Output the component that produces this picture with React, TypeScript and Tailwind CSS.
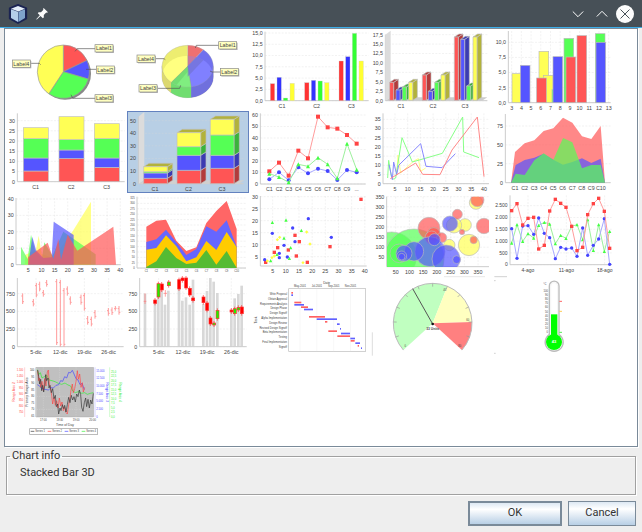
import { useState } from "react";
import type { ReactNode } from "react";

type Tick = [number, string];

const RED = "#ff5555";
const BLUE = "#5555ff";
const GREEN = "#55ff55";
const YELLOW = "#ffff55";
const SERIES = [RED, BLUE, GREEN, YELLOW];

// sides and tops of the 3D bars
const SHADES = ["#b23b3b", "#3b3bb2", "#3bb23b", "#b2b23b"];

const ticks = (start: number, step: number, labels: string): Tick[] =>
  labels.split(" ").map((label, i) => [start + step * i, label]);

const zip = (xs: number[], ys: number[]) => xs.map((x, i) => `${x},${ys[i]}`).join(" ");

interface AxesProps {
  left: number;
  right: number;
  top: number;
  base: number;
  xs: Tick[];
  ys: Tick[];
  xGrid?: boolean;
  size?: number;
  gap?: number;
}

const Axes = ({ left, right, top, base, xs, ys, xGrid = true, size = 16, gap = 16 }: AxesProps) => (
  <g>
    {ys.map(([y, label]) => (
      <g key={label}>
        <line x1={left} x2={right} y1={y} y2={y} stroke="#d8d8d8" strokeDasharray="6 4" />
        <text x={left - 7} y={y} dy={size * 0.36} textAnchor="end" fontSize={size}>
          {label}
        </text>
      </g>
    ))}
    {xs.map(([x, label]) => (
      <g key={label}>
        {xGrid && <line x1={x} x2={x} y1={top} y2={base} stroke="#d8d8d8" strokeDasharray="6 4" />}
        <text x={x} y={base + gap} dy={size * 0.36} textAnchor="middle" fontSize={size}>
          {label}
        </text>
      </g>
    ))}
    <path d={`M${left} ${top}V${base}H${right}`} fill="none" stroke="#ccc" strokeWidth="3" />
  </g>
);

// angles in degrees, clockwise from twelve o'clock
const point = (cx: number, cy: number, rx: number, ry: number, a: number) => {
  const rad = (a * Math.PI) / 180;
  return `${(cx + rx * Math.sin(rad)).toFixed(1)} ${(cy - ry * Math.cos(rad)).toFixed(1)}`;
};

const slice = (cx: number, cy: number, rx: number, ry: number, from: number, to: number) =>
  `M${cx} ${cy}L${point(cx, cy, rx, ry, from)}A${rx} ${ry} 0 ${to - from > 180 ? 1 : 0} 1 ${point(cx, cy, rx, ry, to)}Z`;

const Callout = ({ x, y, line, children }: { x: number; y: number; line: string; children: string }) => (
  <g>
    <path d={line} fill="none" stroke="#555" strokeWidth="2" />
    <rect x={x + 3} y={y + 3} width="54" height="22" fill="#bbb" />
    <rect x={x} y={y} width="54" height="22" fill="#ffffc0" stroke="#888" strokeWidth="2" />
    <text x={x + 27} y={y + 17} textAnchor="middle" fontSize="16">
      {children}
    </text>
  </g>
);

const Pie = () => (
  <g>
    <circle cx="195" cy="221" r="78" fill="#888" />
    {[
      [0, 65],
      [65, 106],
      [106, 214],
      [214, 360],
    ].map(([a, b], i) => (
      <path key={a} d={slice(190, 215, 78, 80, a, b)} fill={SERIES[i]} stroke="#999" strokeWidth="2" />
    ))}
    <Callout x={285} y={134} line="M225 154L232 146H285">Label1</Callout>
    <Callout x={289} y={198} line="M258 208H289">Label2</Callout>
    <Callout x={285} y={284} line="M213 284L218 295H285">Label3</Callout>
    <Callout x={37} y={180} line="M122 194L118 190H91">Label4</Callout>
  </g>
);

const wall = (a: number, b: number) =>
  `M${point(563, 199, 77, 63, a)}A77 63 0 0 1 ${point(563, 199, 77, 63, b)}L${point(563, 230, 77, 63, b)}A77 63 0 0 0 ${point(563, 230, 77, 63, a)}Z`;

const PIE_ANGLES = [0, 38, 172, 220, 360];

const Pie3D = () => (
  <g>
    <clipPath id="pie-floor">
      <ellipse cx="563" cy="230" rx="77" ry="63" />
    </clipPath>
    <path d={wall(90, 172)} fill="#7070dd" stroke="#999" />
    <path d={wall(172, 220)} fill="#70dd70" stroke="#999" />
    <path d={wall(220, 270)} fill="#dcd870" stroke="#999" />
    {["#ee7070", "#7070ee", "#70ee70", "#eded70"].map((fill, i) => (
      <path key={fill} d={slice(563, 199, 77, 63, PIE_ANGLES[i], PIE_ANGLES[i + 1])} fill={fill} stroke="#aaa" />
    ))}
    <g clipPath="url(#pie-floor)">
      {["#c878a0", "#8080ff", "#80ee80", "#ffff80"].map((fill, i) => (
        <path key={fill} d={slice(563, 199, 77, 63, PIE_ANGLES[i], PIE_ANGLES[i + 1])} fill={fill} stroke="#999" />
      ))}
      <path d={wall(220, 270)} fill="#dcd870" />
      <path d={wall(172, 220)} fill="#70dd70" />
      <path d={wall(90, 172)} fill="#7070dd" />
      <path d="M563 199L608 153L622 168L563 230Z" fill="#7070cc" opacity="0.6" />
      <path d="M563 199L514 247L530 254L563 215Z" fill="#66cc66" opacity="0.5" />
    </g>
    <Callout x={656} y={125} line="M586 144L589 136H656">Label1</Callout>
    <Callout x={661} y={205} line="M630 213L636 216H661">Label2</Callout>
    <Callout x={417} y={254} line="M542 256L539 265H471">Label3</Callout>
    <Callout x={411} y={165} line="M496 179L492 176H465">Label4</Callout>
  </g>
);

const BARS: [number, number][] = [
  [61, 251], [81, 232], [100, 294], [120, 250],
  [164, 248], [184, 241], [204, 243], [224, 248],
  [267, 183], [287, 170], [307, 100], [327, 183],
];

const BarChart = () => (
  <g>
    <Axes
      left={45}
      right={356}
      top={95}
      base={302}
      xGrid={false}
      xs={ticks(96, 104, "C1 C2 C3")}
      ys={ticks(99, 33.8, "15,0 12,5 10,0 7,5 5,0 2,5 0,0")}
    />
    {BARS.map(([x, y], i) => (
      <rect
        key={x}
        x={x}
        y={y}
        width="13"
        height={302 - y}
        fill={["#ff3333", "#3333ff", "#33ff33", "#ffff33"][i % 4]}
        stroke="#ccc"
      />
    ))}
  </g>
);

interface BlockProps {
  x: number;
  y: number;
  w: number;
  h: number;
  dx: number;
  dy: number;
  color: number;
  cap?: boolean;
}

const Block = ({ x, y, w, h, dx, dy, color, cap = true }: BlockProps) => (
  <g stroke="#c0c0c0" strokeWidth="2" strokeLinejoin="round">
    <path d={`M${x + w} ${y}l${dx} ${-dy}v${h}l${-dx} ${dy}Z`} fill={SHADES[color]} />
    {cap && <path d={`M${x} ${y}l${dx} ${-dy}h${w}l${-dx} ${dy}Z`} fill={SHADES[color]} />}
    <rect x={x} y={y} width={w} height={h} fill={SERIES[color]} />
  </g>
);

const BARS_3D: [number, number][] = [
  [419, 247], [438, 270], [457, 261], [476, 247],
  [517, 225], [535, 274], [554, 247], [573, 225],
  [613, 111], [632, 118], [650, 258], [669, 111],
];

const BarChart3D = () => (
  <g>
    <Axes
      left={406}
      right={712}
      top={104}
      base={302}
      xGrid={false}
      xs={ticks(453, 96, "C1 C2 C3")}
      ys={ticks(104, 28.3, "17,5 15,0 12,5 10,0 7,5 5,0 2,5 0,0")}
    />
    <path d="M406 104L422 92V292L406 302Z" fill="#dcdcdc" />
    <path d="M406 302L422 292H712L696 302Z" fill="#ccc" />
    {BARS_3D.map(([x, y], i) => (
      <Block key={x} x={x} y={y} w={12} h={301 - y} dx={14} dy={9} color={i % 4} />
    ))}
  </g>
);

const XY_BARS: [number, number, number][] = [
  [96, 221, 3], [121, 196, 1], [177, 154, 3], [190, 226, 3], [216, 268, 2], [170, 234, 0],
  [219, 170, 1], [252, 115, 2], [258, 171, 0], [291, 107, 0], [346, 101, 2], [348, 127, 1],
];

const XYBarChart = () => (
  <g>
    <Axes
      left={85}
      right={392}
      top={93}
      base={308}
      xs={ticks(95, 29.1, "3 4 5 6 7 8 9 10 11 12 13")}
      ys={ticks(127, 45.3, "10,0 7,5 5,0 2,5 0,0")}
    />
    {XY_BARS.map(([x, y, c]) => (
      <rect key={x} x={x} y={y} width="29" height={308 - y} fill={SERIES[c]} stroke="#bbb" strokeWidth="2" />
    ))}
  </g>
);

const Stacked = () => (
  <g>
    <Axes
      left={52}
      right={374}
      top={16}
      base={221}
      xGrid={false}
      xs={ticks(107, 106.5, "C1 C2 C3")}
      ys={ticks(38, 30.5, "30 25 20 15 10 5 0")}
    />
    {[
      [70, 221, 189, 150, 92, 59],
      [177, 221, 152, 126, 95, 26],
      [283, 221, 178, 150, 92, 47],
    ].map(([x, ...levels]) =>
      levels.slice(1).map((y, i) => (
        <rect
          key={`${x}-${y}`}
          x={x}
          y={y}
          width="75"
          height={levels[i] - y}
          fill={SERIES[i]}
          stroke="#c0c0c0"
          strokeWidth="2"
        />
      )),
    )}
  </g>
);

const Stacked3D = () => (
  <g>
    <Axes
      left={415}
      right={730}
      top={26}
      base={227}
      xGrid={false}
      xs={ticks(465, 100.5, "C1 C2 C3")}
      ys={ticks(38, 37.8, "50 40 30 20 10 0")}
    />
    <path d="M417 25L433 12V215L417 227Z" fill="#dcdcdc" />
    <path d="M417 227L433 217H733L717 227Z" fill="#d0d0d0" />
    {[
      [431, 227, 211, 195, 191, 176],
      [531, 227, 187, 142, 116, 74],
      [631, 227, 181, 142, 81, 34],
    ].map(([x, ...levels]) =>
      levels.slice(1).map((y, i) => (
        <Block key={`${x}-${y}`} x={x} y={y} w={71} h={levels[i] - y} dx={16} dy={10} color={i} cap={i === 3} />
      )),
    )}
  </g>
);

const Mark = ({ x, y, kind, r = 5 }: { x: number; y: number; kind: number; r?: number }) => {
  if (kind === 0) return <rect x={x - r} y={y - r} width={r * 2} height={r * 2} fill="#ff4444" />;
  if (kind === 1) return <circle cx={x} cy={y} r={r} fill="#4444ff" />;
  if (kind === 2) return <path d={`M${x} ${y - r}l${r} ${r * 2}h${-r * 2}Z`} fill="#44ff44" />;
  return <path d={`M${x} ${y - r}l${r} ${r}l${-r} ${r}l${-r} ${-r}Z`} fill="#ffff44" />;
};

const MarkedLine = ({ xs, ys, kind, r }: { xs: number[]; ys: number[]; kind: number; r: number }) => (
  <g>
    <polyline points={zip(xs, ys)} fill="none" stroke={["#ff9c9c", "#a8a8ff", "#9cf09c"][kind]} strokeWidth="3" />
    {xs.map((x, i) => (
      <Mark key={x} x={x} y={ys[i]} kind={kind} r={r} />
    ))}
  </g>
);

const LINE_X = [58, 87, 116, 145, 174, 204, 233, 262, 291, 320];

const LineChart = () => (
  <g>
    <Axes
      left={31}
      right={347}
      top={16}
      base={228}
      xGrid={false}
      xs={ticks(58, 29.1, "C1 C2 C3 C4 C5 C6 C7 C8 C9 ...")}
      ys={ticks(21, 34.5, "60 50 40 30 20 10 0")}
    />
    <MarkedLine xs={LINE_X} ys={[190, 164, 203, 128, 151, 26, 58, 62, 81, 107]} kind={0} r={6} />
    <MarkedLine xs={LINE_X} ys={[214, 193, 217, 178, 196, 182, 189, 216, 186, 193]} kind={1} r={6} />
    <MarkedLine xs={LINE_X} ys={[197, 207, 223, 169, 175, 149, 169, 211, 107, 185]} kind={2} r={6} />
  </g>
);

const XYLine = () => (
  <g>
    <Axes
      left={399}
      right={717}
      top={16}
      base={227}
      xs={ticks(435, 38.1, "5 10 15 20 25 30 35 40")}
      ys={ticks(34, 27.6, "35 30 25 20 15 10 5 0")}
    />
    <g fill="none" strokeWidth="3">
      <polyline stroke="#ffff88" points="440,200 444,141 452,195 490,160 505,152 512,190 527,180" />
      <polyline
        stroke="#88ff88"
        points="413,210 416,157 424,205 431,214 437,210 443,172 456,89 487,162 577,136 638,27 641,132 687,149"
      />
      <polyline
        stroke="#8888ff"
        points="417,170 427,215 431,162 440,200 446,172 512,107 528,175 576,179 616,137"
      />
      <polyline stroke="#ff8888" points="421,212 497,165 518,199 570,200 606,126 682,27 702,206" />
    </g>
  </g>
);

const AreaChart = () => (
  <g>
    <Axes
      left={76}
      right={392}
      top={18}
      base={224}
      xGrid={false}
      xs={ticks(105, 28.6, "C1 C2 C3 C4 C5 C6 C7 C8 C9 C10")}
      ys={ticks(54, 56.6, "75 50 25 0")}
    />
    <g fillOpacity="0.7">
      <polygon
        fill={RED}
        points="93,224 105,132 134,106 163,97 191,69 220,61 249,29 277,44 306,85 334,93 362,54 375,224"
      />
      <polygon
        fill={BLUE}
        points="93,224 107,171 134,156 163,149 191,137 220,155 249,170 277,162 306,151 334,165 362,152 375,224"
      />
      <polygon
        fill={GREEN}
        points="93,224 107,197 134,201 163,157 191,136 220,155 249,90 277,103 306,181 334,171 362,171 375,224"
      />
    </g>
  </g>
);

const XYArea = () => (
  <g>
    <Axes
      left={48}
      right={362}
      top={12}
      base={212}
      xs={ticks(85, 39.4, "5 10 15 20 25 30 35 40")}
      ys={ticks(15, 49.2, "40 30 20 10 0")}
    />
    <g fillOpacity="0.7">
      <polygon
        fill={YELLOW}
        points="74,212 76,182 108,168 116,125 125,180 160,192 219,110 273,23 273,212"
      />
      <polygon
        fill={GREEN}
        points="63,212 63,158 83,195 93,122 105,170 126,192 133,145 157,185 190,113 287,181 287,212"
      />
      <polygon fill={BLUE} points="85,212 97,128 108,168 130,192 155,190 161,83 221,123 221,212" />
      <polygon
        fill={RED}
        points="84,212 84,190 143,146 160,195 175,135 183,197 203,122 232,170 340,98 348,212"
      />
    </g>
  </g>
);

const STACK_X = [439, 469, 498, 529, 559, 589, 619, 649, 680, 710];
const STACK_AREAS: [string, number[]][] = [
  ["#ff6666", [98, 80, 77, 140, 171, 160, 87, 51, 21, 105]],
  ["#6666ff", [144, 136, 107, 145, 183, 165, 97, 113, 79, 158]],
  ["#ffcc00", [167, 162, 124, 157, 202, 190, 141, 168, 114, 160]],
  ["#55bb33", [219, 202, 159, 192, 210, 206, 168, 212, 171, 222]],
];

const StackedArea = () => (
  <g>
    <Axes
      left={411}
      right={738}
      top={8}
      base={222}
      xGrid={false}
      size={8}
      gap={9}
      xs={ticks(439, 30.1, "C1 C2 C3 C4 C5 C6 C7 C8 C9 C10")}
      ys={ticks(12, 16.2, "325 300 275 250 225 200 175 150 125 100 75 50 25 0")}
    />
    {STACK_AREAS.map(([fill, ys]) => (
      <polygon key={fill} fill={fill} points={`439,222 ${zip(STACK_X, ys)} 710,222`} />
    ))}
  </g>
);

const SCATTER: [number, number][][] = [
  [[333, 28], [135, 136], [148, 155], [83, 173], [73, 187], [115, 180], [139, 198], [172, 217], [240, 170], [47, 217]],
  [[44, 209], [67, 130], [88, 190], [88, 203], [102, 166], [112, 201], [128, 114], [135, 155], [175, 86], [244, 142]],
  [[67, 97], [108, 90], [102, 144], [154, 121], [122, 173], [81, 193], [62, 212], [118, 205]],
  [[89, 142], [82, 149], [170, 126], [180, 162], [73, 198], [66, 203], [52, 213], [159, 218]],
];

const Scatter = () => (
  <g>
    <Axes
      left={31}
      right={350}
      top={18}
      base={228}
      xs={ticks(68, 39.5, "5 10 15 20 25 30 35 40")}
      ys={ticks(20, 36, "30 25 20 15 10 5")}
    />
    {SCATTER.map((points, kind) => points.map(([x, y]) => <Mark key={`${x}-${y}`} x={x} y={y} kind={kind} />))}
  </g>
);

const BUBBLES: [number, number, number, number][] = [
  [425, 200, 74, 2], [492, 207, 90, 2], [448, 190, 28, 2],
  [678, 38, 20, 3], [645, 105, 19, 3], [612, 106, 23, 3], [598, 165, 17, 3], [657, 165, 32, 3], [551, 130, 18, 3],
  [537, 115, 33, 0], [551, 133, 20, 0], [545, 143, 20, 0], [575, 143, 15, 0], [622, 73, 15, 0],
  [702, 108, 23, 0], [682, 30, 20, 0], [671, 150, 11, 0], [636, 126, 8, 0],
  [540, 185, 45, 1], [588, 207, 42, 1], [492, 184, 29, 1], [462, 190, 24, 1], [455, 198, 15, 1],
  [455, 200, 10, 1], [620, 209, 12, 1], [600, 101, 23, 1], [553, 149, 18, 1],
];

const Bubbles = () => (
  <g>
    <Axes
      left={410}
      right={717}
      top={20}
      base={230}
      xs={ticks(437, 41.2, "50 100 150 200 250 300 350")}
      ys={ticks(20, 30.3, "350 300 250 200 150 100 50")}
    />
    <clipPath id="bubble-plot">
      <rect x="411" y="20" width="306" height="211" />
    </clipPath>
    <g clipPath="url(#bubble-plot)" fillOpacity="0.7" stroke="#bbb" strokeWidth="2">
      {BUBBLES.map(([x, y, r, c], i) => (
        <circle key={i} cx={x} cy={y} r={r} fill={SERIES[c]} />
      ))}
    </g>
  </g>
);

const TIME_X = [95, 111, 128, 144, 161, 176, 193, 209, 226, 242, 258, 275, 291, 308, 323, 340, 356, 373, 389];

const TimeSeries = () => (
  <g>
    <Axes
      left={90}
      right={395}
      top={262}
      base={470}
      size={15}
      gap={18}
      xs={ticks(144, 115, "4-ago 11-ago 18-ago")}
      ys={ticks(293, 35.4, "2.500 2.000 1.500 1.000 500 0")}
    />
    <MarkedLine
      xs={TIME_X}
      ys={[405, 350, 400, 377, 390, 352, 343, 348, 407, 382, 391, 355, 350, 395, 335, 427, 350, 430, 370]}
      kind={2}
      r={5}
    />
    <MarkedLine
      xs={TIME_X}
      ys={[362, 451, 354, 353, 379, 330, 376, 389, 452, 418, 423, 420, 445, 360, 442, 412, 393, 332, 469]}
      kind={1}
      r={5}
    />
    <MarkedLine
      xs={TIME_X}
      ys={[308, 287, 351, 331, 328, 423, 412, 309, 274, 286, 298, 355, 428, 418, 320, 287, 271, 310, 421]}
      kind={0}
      r={5}
    />
  </g>
);

const HIGH_LOW: [number, number, number][] = [
  [68, 58, 90], [100, 75, 97], [109, 27, 70], [119, 23, 52], [130, 48, 68], [140, 18, 38], [170, 15, 213],
  [181, 18, 218], [192, 42, 218], [202, 37, 65], [211, 67, 92], [243, 62, 92], [253, 57, 110], [263, 126, 152],
  [274, 128, 157], [285, 108, 134], [325, 102, 125], [336, 100, 123], [346, 96, 110], [357, 96, 122],
];

const HighLow = () => (
  <g>
    <Axes
      left={52}
      right={371}
      top={12}
      base={218}
      xs={ticks(108, 72.6, "5-dic 12-dic 19-dic 26-dic")}
      ys={ticks(59, 53, "750 500 250 0")}
    />
    {HIGH_LOW.map(([x, top, bottom]) => (
      <path
        key={x}
        d={`M${x} ${top}V${bottom}M${x - 4} ${top + 8}h4M${x} ${bottom - 7}h4`}
        stroke="#ff9a9a"
        strokeWidth="3"
      />
    ))}
  </g>
);

const VOLUME: [number, number][] = [
  [431, 59], [461, 80], [471, 65], [481, 50], [491, 92], [501, 50], [533, 45], [543, 80], [554, 70], [565, 92],
  [575, 17], [606, 90], [617, 51], [627, 12], [637, 23], [648, 57], [690, 113], [700, 73], [711, 60], [721, 35],
];

const CANDLES: [number, number, number, boolean][] = [
  [461, 78, 88, false], [471, 29, 69, true], [481, 30, 48, false], [502, 24, 35, true], [533, 17, 45, false],
  [543, 12, 20, false], [554, 12, 42, false], [565, 43, 63, false], [575, 72, 80, false], [606, 69, 86, false],
  [617, 87, 109, false], [627, 132, 150, false], [638, 147, 153, true], [648, 109, 134, true],
  [690, 108, 114, false], [700, 104, 119, true], [711, 100, 108, true], [721, 99, 119, false],
];

const Candlestick = () => (
  <g>
    {VOLUME.map(([x, y]) => (
      <rect key={x} x={x} y={y} width="8" height={218 - y} fill="#d8d8d8" />
    ))}
    <Axes
      left={419}
      right={740}
      top={12}
      base={218}
      xs={ticks(476, 72.6, "5-dic 12-dic 19-dic 26-dic")}
      ys={ticks(59, 53, "750 500 250 0")}
    />
    <path d="M435 58V90M431 82H439M496 48V68M491 58H501" stroke="#ff7777" strokeWidth="2" />
    {CANDLES.map(([x, top, bottom, up]) => (
      <g key={x} stroke="#ff3333" strokeWidth="2">
        <line x1={x + 4} x2={x + 4} y1={top - 6} y2={bottom + 6} />
        <rect x={x} y={top} width="9" height={bottom - top} fill={up ? "#22ee00" : "#ff0000"} />
      </g>
    ))}
  </g>
);

const TASKS = [
  "Write Proposal",
  "Obtain Approval",
  "Requirements Analysis",
  "Design Phase",
  "Design Signoff",
  "Alpha Implementation",
  "Design Review",
  "Revised Design Signoff",
  "Beta Implementation",
  "Testing",
  "Final Implementation",
  "Signoff",
];

const SPANS: [number, number, number, number][] = [
  [124, 54, 5, 0], [124, 61, 5, 1], [133, 83, 21, 0], [133, 90, 29, 1], [153, 97, 21, 0], [162, 104, 27, 1],
  [177, 126, 48, 0], [200, 133, 61, 1], [225, 141, 7, 0], [261, 148, 8, 1], [270, 162, 3, 1], [235, 169, 26, 0],
  [273, 176, 27, 1], [262, 184, 38, 0], [301, 191, 14, 1], [302, 198, 12, 0], [316, 205, 14, 1],
  [323, 213, 4, 0], [333, 220, 3, 1],
];

const Gantt = () => (
  <g fontSize="8">
    <rect x="116" y="44" width="231" height="188" fill="none" stroke="#bbb" strokeWidth="2" />
    {ticks(150, 50.5, "May-2001 Jul-2001 Sep-2001 Nov-2001").map(([x, label]) => (
      <g key={label}>
        <line x1={x} x2={x} y1="44" y2="232" stroke="#e8e8e8" />
        <text x={x} y="40" textAnchor="middle">
          {label}
        </text>
      </g>
    ))}
    {TASKS.map((task, i) => (
      <text key={task} x="111" y={63 + i * 14.4} textAnchor="end">
        {task}
      </text>
    ))}
    {SPANS.map(([x, y, w, c]) => (
      <rect key={y} x={x} y={y} width={w} height="5" fill={["#ff6060", "#6060ff"][c]} />
    ))}
    <text x="230" y="29" textAnchor="middle" fontSize="10">
      Date
    </text>
    <text transform="rotate(-90 22 138)" x="22" y="138" textAnchor="middle" fontSize="10">
      Task
    </text>
  </g>
);

const Gauge = () => (
  <g>
    <path d="M367 175V245" stroke="#ccc" strokeWidth="2" />
    <path d="M582 8H705" stroke="#ddd" strokeWidth="2" />
    <path d={slice(548, 148, 118, 120, -132, 22)} fill="#c0ffc0" />
    <path d={slice(548, 148, 118, 120, 22, 88)} fill="#ffffc0" />
    <path d={slice(548, 148, 118, 120, 88, 132)} fill="#ff8080" />
    <path
      d={`M${point(548, 148, 118, 120, -132)}A118 120 0 1 1 ${point(548, 148, 118, 120, 132)}`}
      fill="none"
      stroke="#bbb"
      strokeWidth="3"
    />
    {[-110, -88, -66, -44, -22, 0, 22, 44, 66, 88, 110].map((a) => (
      <path
        key={a}
        d={`M${point(548, 148, 108, 110, a)}L${point(548, 148, 118, 120, a)}`}
        stroke="#999"
        strokeWidth="2"
      />
    ))}
    <path d="M488 44L548 150" stroke="#555" strokeWidth="3" />
    <circle cx="548" cy="150" r="4" fill="#111" />
    <text x="548" y="168" textAnchor="middle" fontSize="10" fontWeight="bold">
      33 Units
    </text>
    <g fontSize="8" textAnchor="middle">
      <text x="466" y="219">0</text>
      <text x="584" y="50">40</text>
      <text x="653" y="141">60</text>
      <text x="629" y="219">80</text>
    </g>
  </g>
);

const Thermometer = () => (
  <g>
    <path d="M733 8H771M732 20H737M732 238H737" stroke="#bbb" strokeWidth="2" />
    <path
      d="M898 182V36a14 14 0 0 1 29 0V182a27 27 0 1 1-29 0Z"
      fill="#fff"
      stroke="#bbb"
      strokeWidth="4"
    />
    <path d="M902 178V36a10 10 0 0 1 21 0V178" fill="none" stroke="#ddd" strokeWidth="1" />
    <rect x="903" y="121" width="19" height="70" fill="#00ff00" />
    <circle cx="912" cy="204" r="24" fill="#00ff00" />
    <text x="912" y="208" textAnchor="middle" fontSize="12" fontWeight="bold" fill="#fff">
      43
    </text>
    <g fontSize="8" textAnchor="end">
      <text x="889" y="32">°C</text>
      {ticks(53, 12.5, "100 90 80 70 60 50 40 30 20 10 0").map(([y, label]) => (
        <text key={label} x="894" y={y}>
          {label}
        </text>
      ))}
    </g>
    <g strokeWidth="3">
      <path d="M928 82H936" stroke="#ff6666" />
      <path d="M928 112H936" stroke="#ffcc55" />
      <path d="M928 175H936" stroke="#55ee55" />
    </g>
  </g>
);

interface ScaleProps {
  x: number;
  titleX: number;
  title: string;
  labels: Tick[];
  color: string;
  side: "left" | "right";
}

const Scale = ({ x, titleX, title, labels, color, side }: ScaleProps) => (
  <g fill={color} fontSize="8">
    <line x1={x} x2={x} y1="28" y2="177" stroke={color} strokeOpacity="0.7" />
    {labels.map(([y, label]) => (
      <text key={label} x={side === "left" ? x - 4 : x + 4} y={y + 3} textAnchor={side === "left" ? "end" : "start"}>
        {label}
      </text>
    ))}
    <text
      transform={`rotate(${side === "left" ? -90 : 90} ${titleX} 102)`}
      x={titleX}
      y="102"
      textAnchor="middle"
      fontSize="10"
    >
      {title}
    </text>
  </g>
);

const MultiAxis = () => (
  <g>
    <Scale x={74} titleX={44} title="Range Axis 2" color="#ff4444" side="left" labels={ticks(36, 17.8, "1.100 1.050 1.000 950 900 850 800 750")} />
    <Scale x={107} titleX={84} title="Primary Range Axis" color="#333" side="left" labels={ticks(36, 19.7, "100 95 90 85 80 75 70 65")} />
    <Scale x={285} titleX={318} title="Range Axis 3" color="#4444ff" side="right" labels={ticks(38, 23.1, "15.000 12.500 10.000 7.500 5.000 2.500 0")} />
    <Scale x={329} titleX={356} title="Range Axis 4" color="#33ee33" side="right" labels={ticks(42, 13.4, "25,0 22,5 20,0 17,5 15,0 12,5 10,0 7,5 5,0 2,5 0,0")} />
    <rect x="110" y="28" width="171" height="149" fill="#c0c0c0" stroke="#999" />
    <path d="M130 28V177M179 28V177M228 28V177M110 75H281M110 115H281M110 154H281" stroke="#ddd" strokeDasharray="4 3" />
    <g fill="none" strokeWidth="2">
      <polyline
        stroke="#33ee33"
        points="112,35 116,50 121,44 126,60 133,56 140,51 147,66 156,68 165,71 175,76 185,79 195,75 204,81 212,84 218,99 226,104 235,101 245,106 254,104 262,109 271,106 280,104"
      />
      <polyline
        stroke="#4444ff"
        points="112,80 119,84 125,91 135,94 145,96 153,89 160,90 168,82 176,80 182,68 188,70 194,56 200,60 206,43 211,45 217,37 222,48 228,62 234,66 240,80 246,76 253,95"
      />
      <polyline
        stroke="#ff4444"
        points="113,38 116,68 119,60 122,88 126,70 130,98 134,62 138,84 142,42 145,36 148,78 152,92 155,112 158,138 162,118 166,142 170,128 174,150 178,120 182,144 186,132 190,158 194,148 198,164 202,168 206,140 210,120 213,96 217,78 220,104 224,92 228,70 232,38 235,64 239,48 243,88 247,74 250,102 254,88"
      />
      <polyline
        stroke="#333"
        points="113,36 116,56 119,78 122,64 125,98 128,82 131,102 134,84 137,50 140,68 144,60 147,90 150,82 154,104 158,92 162,122 166,112 169,146 173,138 176,168 180,150 183,158 187,140 191,152 194,142 198,162 202,140 206,118 210,134 214,112 218,126 222,116 226,132 230,108 234,116 238,96 242,110 245,148 249,160 253,134 257,120 260,146 264,124 268,150 272,126 276,138 280,106"
      />
    </g>
    <g fontSize="8" textAnchor="middle">
      {ticks(130, 49.3, "17:00 18:00 19:00 20:00").map(([x, label]) => (
        <text key={label} x={x} y="190">
          {label}
        </text>
      ))}
      <text x="195" y="204" fontSize="10">
        Time of Day
      </text>
    </g>
    <rect x="89" y="212" width="204" height="17" fill="#fff" stroke="#999" strokeWidth="2" />
    {["#333", "#ff4444", "#4444ff", "#33ee33"].map((stroke, i) => (
      <g key={stroke}>
        <line x1={92 + i * 51} x2={103 + i * 51} y1="220" y2="220" stroke={stroke} strokeWidth="2" />
        <text x={106 + i * 51} y="223" fontSize="8">
          {`Series ${i + 1}`}
        </text>
      </g>
    ))}
  </g>
);

// view: origin of the 366x246 canvas that each thumbnail is drawn on
const charts: { name: string; view: string; art: ReactNode }[] = [
  { name: "Pie", view: "15 87", art: <Pie /> },
  { name: "Pie 3D", view: "381 87", art: <Pie3D /> },
  { name: "Bar", view: "-3 87", art: <BarChart /> },
  { name: "Bar 3D", view: "363 87", art: <BarChart3D /> },
  { name: "XY Bar", view: "39 87", art: <XYBarChart /> },
  { name: "Stacked Bar", view: "15 9", art: <Stacked /> },
  { name: "Stacked Bar 3D", view: "381 9", art: <Stacked3D /> },
  { name: "Line", view: "-3 9", art: <LineChart /> },
  { name: "XY Line", view: "363 9", art: <XYLine /> },
  { name: "Area", view: "39 9", art: <AreaChart /> },
  { name: "XY Area", view: "15 -3", art: <XYArea /> },
  { name: "Stacked Area", view: "381 -3", art: <StackedArea /> },
  { name: "Scatter", view: "-3 9", art: <Scatter /> },
  { name: "Bubble", view: "363 9", art: <Bubbles /> },
  { name: "Time Series", view: "39 255", art: <TimeSeries /> },
  { name: "High Low", view: "15 3", art: <HighLow /> },
  { name: "Candlestick", view: "381 3", art: <Candlestick /> },
  { name: "Gantt", view: "-3 3", art: <Gantt /> },
  { name: "Meter", view: "363 3", art: <Gauge /> },
  { name: "Thermometer", view: "729 3", art: <Thermometer /> },
  { name: "Multi Axis", view: "15 -3", art: <MultiAxis /> },
];

const TitleBar = () => (
  <header className="flex h-7 items-center border-b border-[#3daee9] bg-[#475057] pr-2 pl-2">
    {/* App icon */}
    <svg className="h-5 w-5" viewBox="0 0 20 20" aria-hidden="true">
      <path d="M10 .8L18.4 4.2V14.6L10 19.2L1.6 14.6V4.2Z" fill="#1b2452" stroke="#1b2452" strokeWidth="1.5" strokeLinejoin="round" />
      <path d="M10 2L17 4.8L10.4 7.4L3 4.8Z" fill="#e4eef8" />
      <path d="M3 5.2L10 7.8V18L3 14Z" fill="#b4cde8" />
      <path d="M10.4 7.8L17 5.2V14L10.4 18Z" fill="#7fa3cc" />
    </svg>
    <button type="button" aria-label="Keep above" className="ml-2 h-3 w-3">
      <svg viewBox="0 0 12 12" fill="#fcfcfc">
        <path d="M7.6 0L12 4.2L10.8 4.8L10.2 4.6L7.8 7L7.8 9.4L6.8 10.2L4.5 7.9L.8 11.6L.2 11.2L3.8 7.2L1.8 5.2L2.6 4.2L5 4.2L7.4 1.8L7.1 1.1Z" />
      </svg>
    </button>
    <div className="ml-auto flex items-center gap-3">
      <button type="button" aria-label="Minimize" className="h-3 w-3">
        <svg viewBox="0 0 12 12" fill="none" stroke="#fcfcfc">
          <path d="M.8 3.5L6 8.7L11.2 3.5" />
        </svg>
      </button>
      <button type="button" aria-label="Maximize" className="h-3 w-3">
        <svg viewBox="0 0 12 12" fill="none" stroke="#fcfcfc">
          <path d="M.8 8.5L6 3.3L11.2 8.5" />
        </svg>
      </button>
      <button type="button" aria-label="Close" className="-ml-1 h-[18px] w-[18px]">
        <svg viewBox="0 0 18 18" fill="none" stroke="#475057">
          <circle cx="9" cy="9" r="9" fill="#fcfcfc" stroke="none" />
          <path d="M4.5 4.5L13.5 13.5M13.5 4.5L4.5 13.5" />
        </svg>
      </button>
    </div>
  </header>
);

const BUTTON = "h-[25px] border-[#7a8a99] bg-linear-to-b from-[#dde8f3] via-white via-30% to-[#b8cfe5]";

export default function App() {
  const [selected, setSelected] = useState("Stacked Bar 3D");

  return (
    <div className="bg-[#eeeeee] font-['Roboto','Liberation_Sans',sans-serif] text-[11px] text-[#333]">
      <TitleBar />
      <main className="px-1 pb-1.5">
        {/* Chart thumbnails */}
        <div className="grid grid-cols-[repeat(auto-fill,122px)] border border-[#7a8a99] bg-white pb-[7px] shadow-[1px_1px_0_#fff]">
          {charts.map(({ name, view, art }) => (
            <button
              key={name}
              type="button"
              aria-label={name}
              aria-pressed={name === selected}
              onClick={() => setSelected(name)}
              className={
                name === selected
                  ? "h-[82px] bg-[#b8cfe5] outline-1 -outline-offset-1 outline-[#6382bf]"
                  : "h-[82px]"
              }
            >
              <svg
                viewBox={`${view} 366 246`}
                className="h-full w-full font-['Liberation_Sans',Arial,sans-serif]"
                fill="#444"
              >
                {art}
              </svg>
            </button>
          ))}
        </div>

        <fieldset className="mx-0.5 mt-px h-[47px] border border-[#a0a0a0] pl-[13px] shadow-[1px_1px_0_#fff,inset_1px_1px_0_#fff]">
          <legend className="-ml-2.5 px-0.5 leading-4">Chart info</legend>
          <p className="pt-px leading-4">{selected}</p>
        </fieldset>

        <div className="mx-0.5 mt-1.5 flex justify-end gap-1.5">
          <button type="button" className={`${BUTTON} w-[94px] border-2`}>
            OK
          </button>
          <button type="button" className={`${BUTTON} w-[68px] border`}>
            Cancel
          </button>
        </div>
      </main>
    </div>
  );
}
